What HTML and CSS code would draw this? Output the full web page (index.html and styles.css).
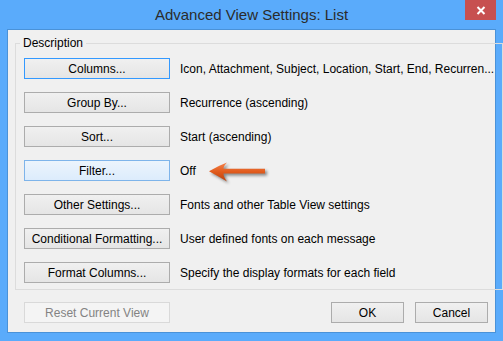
FILE: index.html
```html
<!DOCTYPE html>
<html lang="en">

<head>
    <meta charset="UTF-8">
    <meta name="viewport" content="width=device-width, initial-scale=1.0">
    <title>Advanced View Settings: List</title>
    <link rel="stylesheet" href="styles.css">
</head>

<body>
    <div class="window">
        <div class="titlebar">
            <span></span>
            <h1 class="title">Advanced View Settings: List</h1>
            <button class="close-btn" aria-label="Close">
                <svg width="10" height="9" viewBox="0 0 10 9">
                    <path d="M1.5 1 L8.5 8 M8.5 1 L1.5 8" stroke="#fff" stroke-width="2" fill="none"/>
                </svg>
            </button>
        </div>

        <div class="client">
            <fieldset class="group">
                <legend>Description</legend>
                <div class="row">
                    <button class="btn focused">Columns...</button>
                    <span class="desc">Icon, Attachment, Subject, Location, Start, End, Recurren...</span>
                </div>
                <div class="row">
                    <button class="btn">Group By...</button>
                    <span class="desc">Recurrence (ascending)</span>
                </div>
                <div class="row">
                    <button class="btn">Sort...</button>
                    <span class="desc">Start (ascending)</span>
                </div>
                <div class="row">
                    <button class="btn hover">Filter...</button>
                    <span class="desc">Off</span>
                    <svg class="arrow" width="64" height="26" viewBox="0 0 64 26">
                        <defs>
                            <linearGradient id="arrow-fill" x1="0" y1="0" x2="0" y2="1">
                                <stop offset="0" stop-color="#f5824a"/>
                                <stop offset="0.5" stop-color="#e05a1c"/>
                                <stop offset="1" stop-color="#b8420f"/>
                            </linearGradient>
                        </defs>
                        <path d="M4 14.2 Q13 9 22 5.6 Q18.5 9 18.5 11.8 L60 11.8 L60 16.5 L18.5 16.5 Q18.5 20 22 24.5 Q13 19 4 14.2 Z" fill="url(#arrow-fill)"/>
                    </svg>
                </div>
                <div class="row">
                    <button class="btn">Other Settings...</button>
                    <span class="desc">Fonts and other Table View settings</span>
                </div>
                <div class="row">
                    <button class="btn">Conditional Formatting...</button>
                    <span class="desc">User defined fonts on each message</span>
                </div>
                <div class="row">
                    <button class="btn">Format Columns...</button>
                    <span class="desc">Specify the display formats for each field</span>
                </div>
            </fieldset>

            <div class="footer">
                <button class="btn" disabled>Reset Current View</button>
                <div class="footer-right">
                    <button class="btn small">OK</button>
                    <button class="btn small">Cancel</button>
                </div>
            </div>
        </div>
    </div>
</body>

</html>
```

FILE: styles.css
```css
* {
    margin: 0;
    padding: 0;
    box-sizing: border-box;
}

body {
    font-family: 'Liberation Sans', Arial, sans-serif;
    font-size: 12px;
    background: #5aabfb;
}

.window {
    width: 503px;
    height: 341px;
    background: #5aabfb;
    display: flex;
    flex-direction: column;
}

/* 标题栏 */
.titlebar {
    height: 29px;
    display: grid;
    grid-template-columns: 1fr auto 1fr;
}

.title {
    font-size: 15px;
    font-weight: normal;
    line-height: 29px;
    color: #2b2b2b;
}

.close-btn {
    justify-self: end;
    align-self: start;
    width: 31px;
    height: 20px;
    margin-right: 7px;
    background: #c75050;
    border: none;
    display: flex;
    justify-content: center;
    align-items: center;
}

/* 窗口内容 */
.client {
    height: 304px;
    margin: 0 7px;
    background: #f0f0f0;
    border: 1px solid #4a92d8;
    display: flex;
    flex-direction: column;
}

.group {
    margin: 5px 6px 0 7px;
    padding: 7px 8px 6px 8px;
    border: 1px solid #dcdcdc;
    display: flex;
    flex-direction: column;
    gap: 13px;
}

.group legend {
    line-height: 16px;
    padding: 0 3px;
    margin-left: -4px;
    color: #000;
}

.row {
    display: flex;
    align-items: center;
    height: 21px;
}

.desc {
    margin-left: 10px;
    color: #000;
    white-space: nowrap;
}

.arrow {
    margin: -3px 0 -2px 9px;
    filter: drop-shadow(2px 2px 1.5px rgba(0, 0, 0, 0.45));
}

/* 按钮 */
.btn {
    width: 146px;
    height: 21px;
    font-family: inherit;
    font-size: 12px;
    color: #000;
    background: linear-gradient(#f0f0f0, #e5e5e5);
    border: 1px solid #acacac;
    flex-shrink: 0;
}

.btn.focused {
    border-color: #3399ff;
}

.btn.hover {
    background: linear-gradient(#ecf4fc, #dcecfc);
    border-color: #7eb4ea;
}

.btn:disabled {
    background: #f4f4f4;
    border-color: #d9d9d9;
    color: #838383;
}

.btn.small {
    width: 73px;
}

.footer {
    display: flex;
    justify-content: space-between;
    margin-top: 12px;
    padding: 0 7px 0 16px;
}

.footer-right {
    display: flex;
    gap: 11px;
}
```
